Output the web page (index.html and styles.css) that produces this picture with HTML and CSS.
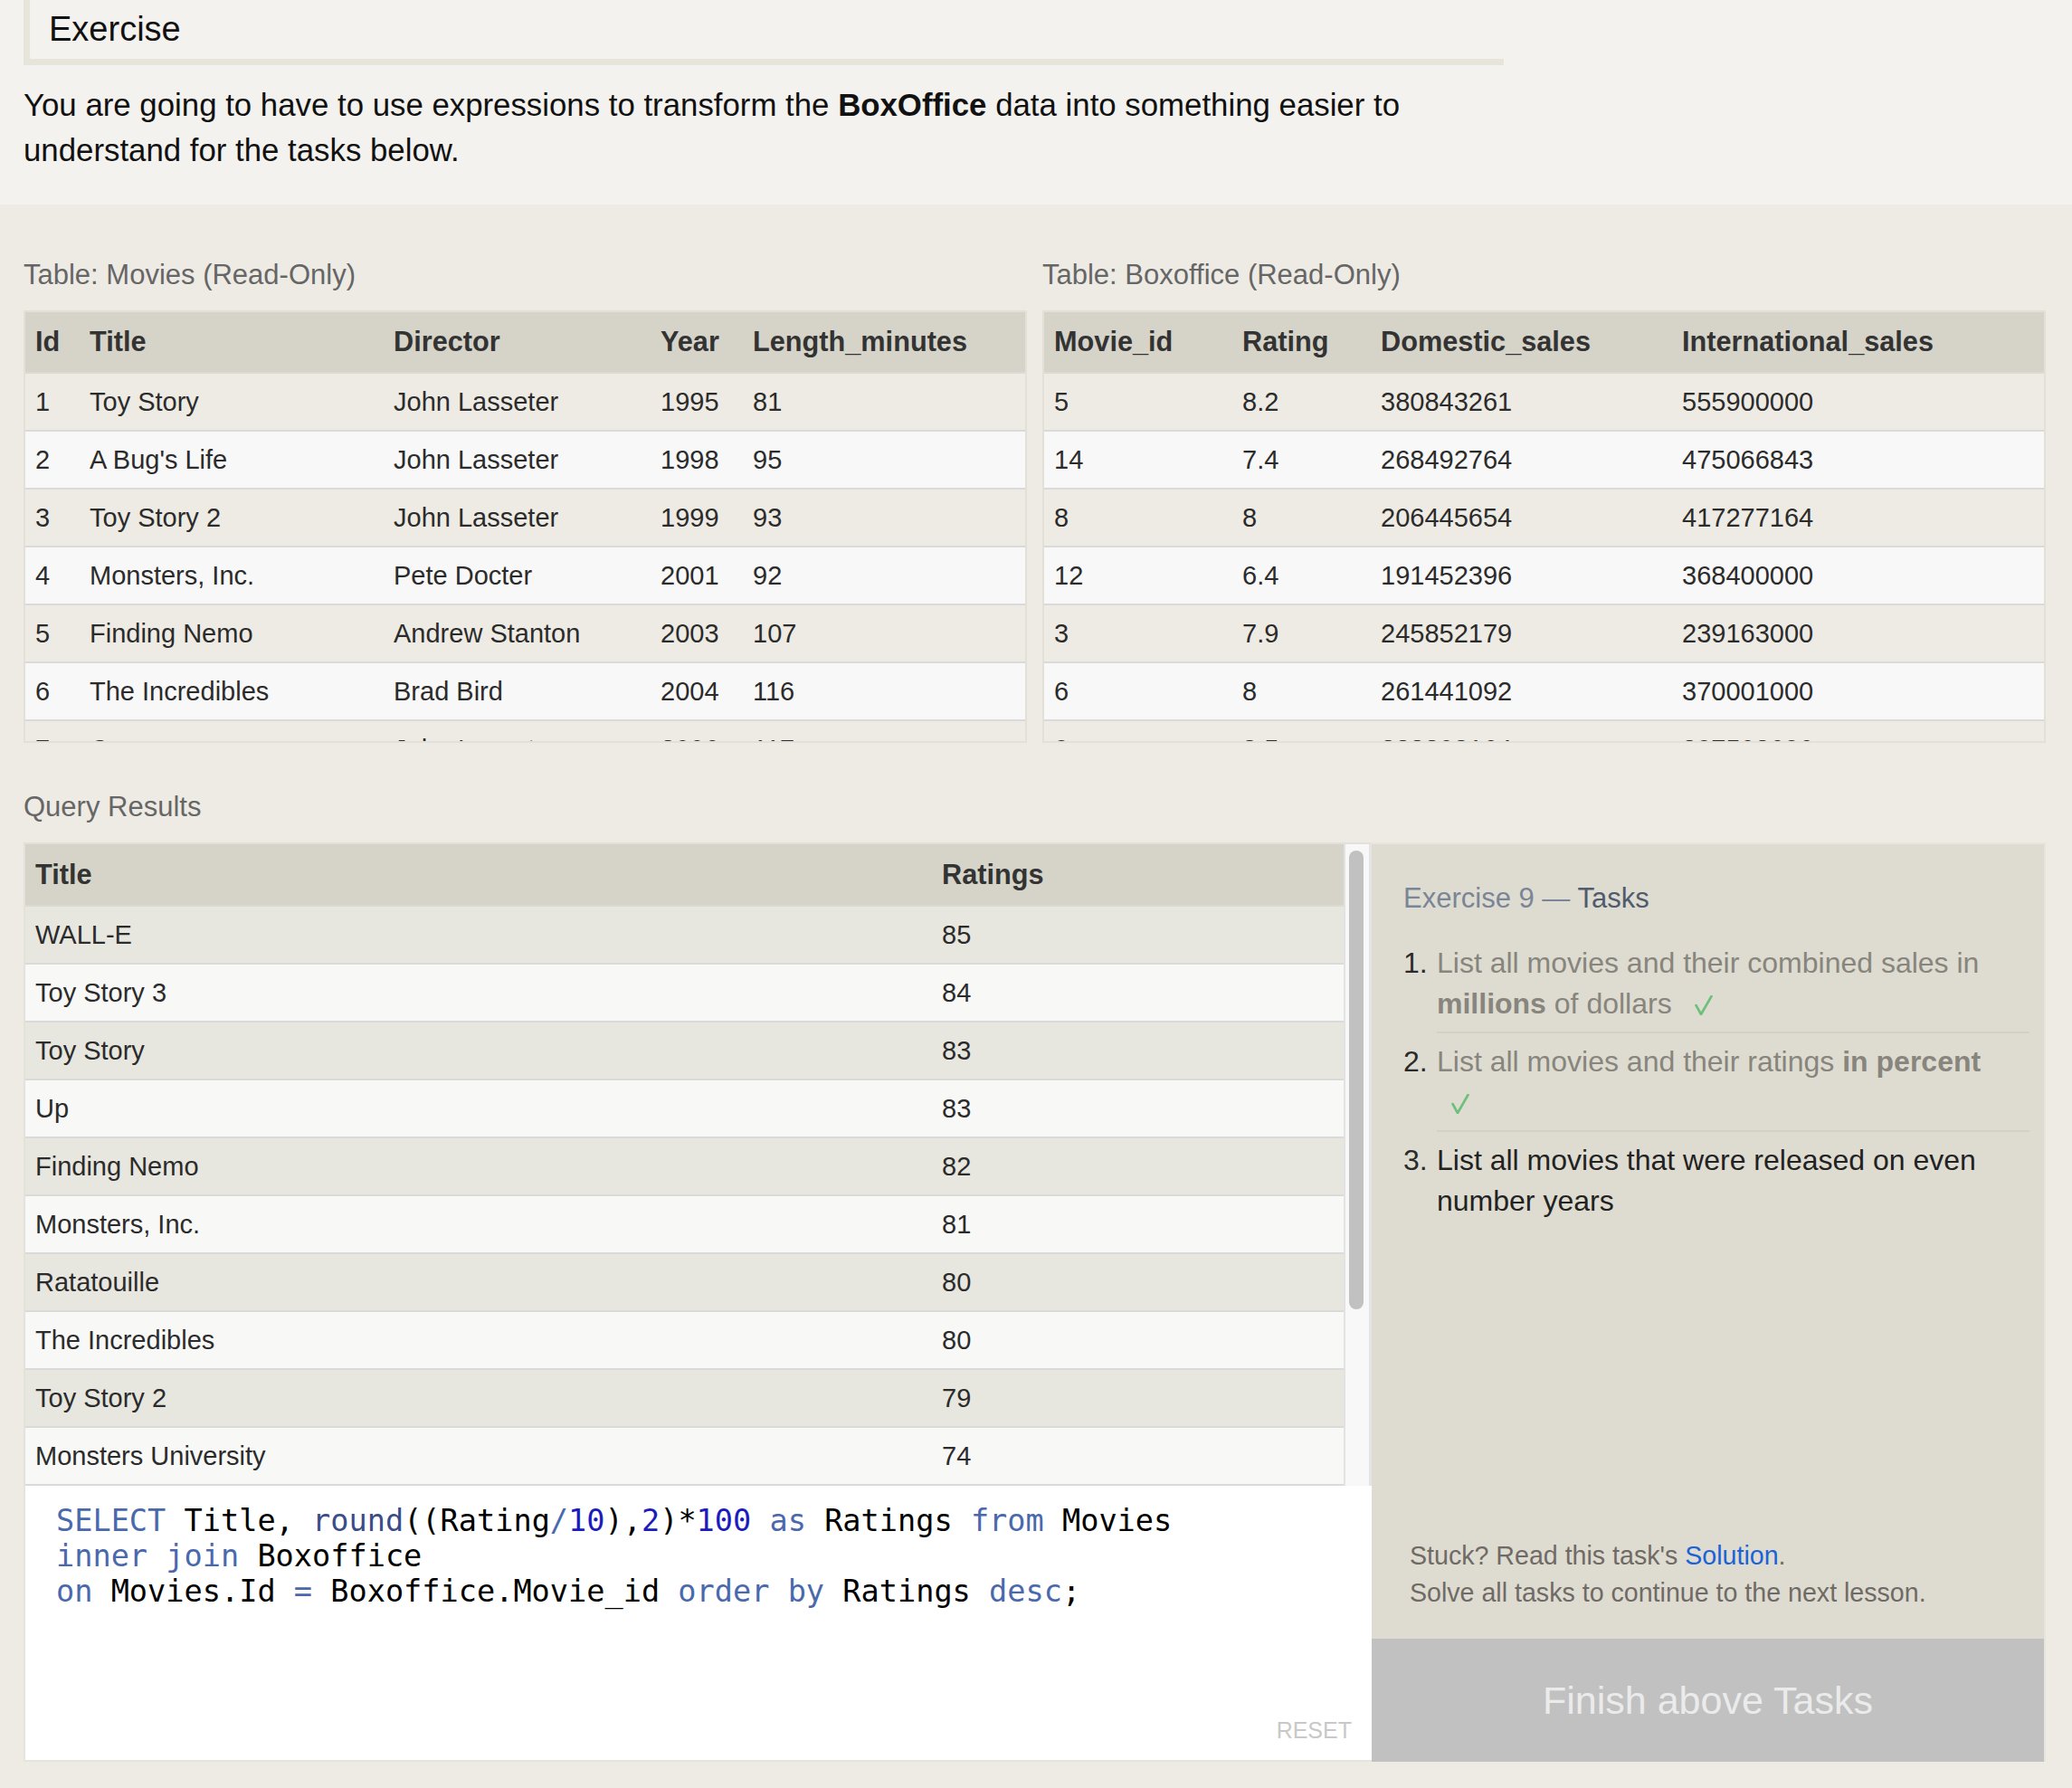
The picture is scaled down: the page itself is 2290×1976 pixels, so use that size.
FILE: index.html
```html
<!DOCTYPE html>
<html lang="en">
<head>
<meta charset="utf-8">
<title>SQLBolt - Exercise 9</title>
<link rel="stylesheet" href="styles.css">
</head>
<body>
<section class="intro">
  <div class="ex-head">Exercise</div>
  <p class="intro-text">You are going to have to use expressions to transform the <b>BoxOffice</b> data into something easier to understand for the tasks below.</p>
</section>

<section class="work">
  <div class="tables">
    <div class="tbl-col">
      <div class="label">Table: Movies (Read-Only)</div>
      <div class="tbl-box">
        <table class="data">
          <colgroup><col class="w-id"><col class="w-title"><col class="w-dir"><col class="w-year"><col></colgroup>
          <thead><tr><th>Id</th><th>Title</th><th>Director</th><th>Year</th><th>Length_minutes</th></tr></thead>
          <tbody>
            <tr><td>1</td><td>Toy Story</td><td>John Lasseter</td><td>1995</td><td>81</td></tr>
            <tr><td>2</td><td>A Bug's Life</td><td>John Lasseter</td><td>1998</td><td>95</td></tr>
            <tr><td>3</td><td>Toy Story 2</td><td>John Lasseter</td><td>1999</td><td>93</td></tr>
            <tr><td>4</td><td>Monsters, Inc.</td><td>Pete Docter</td><td>2001</td><td>92</td></tr>
            <tr><td>5</td><td>Finding Nemo</td><td>Andrew Stanton</td><td>2003</td><td>107</td></tr>
            <tr><td>6</td><td>The Incredibles</td><td>Brad Bird</td><td>2004</td><td>116</td></tr>
            <tr><td>7</td><td>Cars</td><td>John Lasseter</td><td>2006</td><td>117</td></tr>
            <tr><td>8</td><td>Ratatouille</td><td>Brad Bird</td><td>2007</td><td>115</td></tr>
            <tr><td>9</td><td>WALL-E</td><td>Andrew Stanton</td><td>2008</td><td>104</td></tr>
            <tr><td>10</td><td>Up</td><td>Pete Docter</td><td>2009</td><td>101</td></tr>
            <tr><td>11</td><td>Toy Story 3</td><td>Lee Unkrich</td><td>2010</td><td>103</td></tr>
            <tr><td>12</td><td>Cars 2</td><td>John Lasseter</td><td>2011</td><td>120</td></tr>
            <tr><td>13</td><td>Brave</td><td>Brenda Chapman</td><td>2012</td><td>102</td></tr>
            <tr><td>14</td><td>Monsters University</td><td>Dan Scanlon</td><td>2013</td><td>110</td></tr>
          </tbody>
        </table>
      </div>
    </div>
    <div class="tbl-col">
      <div class="label">Table: Boxoffice (Read-Only)</div>
      <div class="tbl-box">
        <table class="data">
          <colgroup><col class="w-mid"><col class="w-rating"><col class="w-dom"><col></colgroup>
          <thead><tr><th>Movie_id</th><th>Rating</th><th>Domestic_sales</th><th>International_sales</th></tr></thead>
          <tbody>
            <tr><td>5</td><td>8.2</td><td>380843261</td><td>555900000</td></tr>
            <tr><td>14</td><td>7.4</td><td>268492764</td><td>475066843</td></tr>
            <tr><td>8</td><td>8</td><td>206445654</td><td>417277164</td></tr>
            <tr><td>12</td><td>6.4</td><td>191452396</td><td>368400000</td></tr>
            <tr><td>3</td><td>7.9</td><td>245852179</td><td>239163000</td></tr>
            <tr><td>6</td><td>8</td><td>261441092</td><td>370001000</td></tr>
            <tr><td>9</td><td>8.5</td><td>223808164</td><td>297503696</td></tr>
            <tr><td>11</td><td>8.4</td><td>415004880</td><td>648167031</td></tr>
            <tr><td>1</td><td>8.3</td><td>191796233</td><td>170162503</td></tr>
            <tr><td>7</td><td>7.2</td><td>244082982</td><td>217900167</td></tr>
            <tr><td>10</td><td>8.3</td><td>293004164</td><td>438338580</td></tr>
            <tr><td>4</td><td>8.1</td><td>289916256</td><td>272900000</td></tr>
            <tr><td>2</td><td>7.2</td><td>162798565</td><td>200600000</td></tr>
            <tr><td>13</td><td>7.2</td><td>237283207</td><td>301700000</td></tr>
          </tbody>
        </table>
      </div>
    </div>
  </div>

  <div class="label label-q">Query Results</div>
  <div class="qgrid">
    <div class="qleft">
      <div class="results">
        <div class="res-scroll">
          <table class="data res">
            <colgroup><col class="w-rtitle"><col></colgroup>
            <thead><tr><th>Title</th><th>Ratings</th></tr></thead>
            <tbody>
              <tr><td>WALL-E</td><td>85</td></tr>
              <tr><td>Toy Story 3</td><td>84</td></tr>
              <tr><td>Toy Story</td><td>83</td></tr>
              <tr><td>Up</td><td>83</td></tr>
              <tr><td>Finding Nemo</td><td>82</td></tr>
              <tr><td>Monsters, Inc.</td><td>81</td></tr>
              <tr><td>Ratatouille</td><td>80</td></tr>
              <tr><td>The Incredibles</td><td>80</td></tr>
              <tr><td>Toy Story 2</td><td>79</td></tr>
              <tr><td>Monsters University</td><td>74</td></tr>
              <tr><td>A Bug's Life</td><td>72</td></tr>
              <tr><td>Cars</td><td>72</td></tr>
              <tr><td>Brave</td><td>72</td></tr>
              <tr><td>Cars 2</td><td>64</td></tr>
            </tbody>
          </table>
        </div>
        <div class="scrollbar"><div class="thumb"></div></div>
      </div>
      <div class="editor">
<pre class="code"><span class="kw">SELECT</span> Title, <span class="fn">round</span>((Rating<span class="kw">/</span><span class="num">10</span>),<span class="num">2</span>)*<span class="num">100</span> <span class="kw">as</span> Ratings <span class="kw">from</span> Movies
<span class="kw">inner join</span> Boxoffice
<span class="kw">on</span> Movies.Id <span class="kw">=</span> Boxoffice.Movie_id <span class="kw">order by</span> Ratings <span class="kw">desc</span>;</pre>
        <span class="reset">RESET</span>
      </div>
    </div>

    <aside class="panel">
      <div class="panel-body">
        <h3 class="tasks-title"><span class="tt-light">Exercise 9 — </span><span class="tt-dark">Tasks</span></h3>
        <ol class="tasks">
          <li class="task done"><span class="num">1.</span><span class="txt">List all movies and their combined sales in <b>millions</b> of dollars <svg class="check" viewBox="0 0 20 22" width="20" height="22"><polyline points="1.5,11 7,21 18.5,1" fill="none" stroke="#6cc07a" stroke-width="2.6" stroke-linejoin="round" stroke-linecap="round"/></svg></span></li>
          <li class="task done"><span class="num">2.</span><span class="txt">List all movies and their ratings <b>in percent</b> <svg class="check" viewBox="0 0 20 22" width="20" height="22"><polyline points="1.5,11 7,21 18.5,1" fill="none" stroke="#6cc07a" stroke-width="2.6" stroke-linejoin="round" stroke-linecap="round"/></svg></span></li>
          <li class="task last"><span class="num">3.</span><span class="txt">List all movies that were released on even number years</span></li>
        </ol>
        <div class="help">
          <div>Stuck? Read this task's <a href="#">Solution</a>.</div>
          <div>Solve all tasks to continue to the next lesson.</div>
        </div>
      </div>
      <div class="finish">Finish above Tasks</div>
    </aside>
  </div>
</section>
</body>
</html>
```

FILE: styles.css
```css
* { box-sizing: border-box; }

body {
  margin: 0;
  background: #eeebe4;
  font-family: "Liberation Sans", Arial, sans-serif;
  color: #222;
}

/* ---------- intro ---------- */
.intro {
  background: #f3f2ee;
  padding: 0 29px 35px 26px;
}

.ex-head {
  width: 1636px;
  border-left: 7px solid #e7e5da;
  border-bottom: 7px solid #e7e5da;
  padding: 8px 21px 9px;
  font-size: 38px;
  line-height: 48px;
  color: #111;
}

.intro-text {
  margin: 19px 0 0;
  width: 1636px;
  font-size: 34.8px;
  line-height: 50px;
  color: #111;
}

/* ---------- work area ---------- */
.work {
  padding: 58px 29px 29px 26px;
}

.tables {
  display: grid;
  grid-template-columns: 1fr 1fr;
  column-gap: 17px;
}

.label {
  font-size: 31px;
  line-height: 40px;
  color: #666;
}

.label-q {
  margin-top: 51px;
}

.tbl-box {
  margin-top: 19px;
  height: 478px;
  border: 2px solid #e3e0d8;
  overflow: hidden;
}

table.data {
  width: 100%;
  border-collapse: separate;
  border-spacing: 0;
  table-layout: fixed;
}

table.data th {
  background: #d6d4c8;
  height: 68px;
  padding: 0 11px;
  text-align: left;
  font-size: 30.7px;
  font-weight: bold;
  color: #333;
  border-bottom: 2px solid #dcdbd3;
  white-space: nowrap;
}

table.data td {
  height: 64px;
  padding: 0 11px;
  font-size: 29px;
  color: #2b2b2b;
  border-bottom: 2px solid #dadada;
  white-space: nowrap;
  overflow: hidden;
}

table.data tbody tr:nth-child(odd) td { background: #eeebe4; }
table.data tbody tr:nth-child(even) td { background: #f8f8f8; }

.w-id { width: 60px; }
.w-title { width: 336px; }
.w-dir { width: 295px; }
.w-year { width: 102px; }

.w-mid { width: 208px; }
.w-rating { width: 153px; }
.w-dom { width: 333px; }

.w-rtitle { width: 1002px; }

/* ---------- query grid ---------- */
.qgrid {
  margin-top: 19px;
  display: grid;
  grid-template-columns: 1490px 1fr;
}

.qleft {
  display: flex;
  flex-direction: column;
}

.results {
  display: flex;
  height: 711px;
  border-top: 2px solid #e2e0d8;
  border-left: 2px solid #e4e2da;
}

.res-scroll {
  flex: 1;
  overflow: hidden;
}

table.res th { height: 69px; }
table.res tbody tr:nth-child(odd) td { background: #e7e6df; }
table.res tbody tr:nth-child(even) td { background: #f8f8f7; }

.scrollbar {
  width: 31px;
  flex: none;
  background: #f8f8f8;
  border-left: 2px solid #e2e2e2;
  border-right: 3px solid #e4e4e4;
  padding: 7px 0 0 4px;
}

.thumb {
  width: 16px;
  height: 507px;
  border-radius: 8px;
  background: #c1c1c1;
}

.editor {
  height: 305px;
  background: #fff;
  border-left: 2px solid #e6e4dc;
  border-bottom: 2px solid #e6e4dc;
  padding: 19px 22px 18px 34px;
  display: flex;
  flex-direction: column;
}

.code {
  margin: 0;
  flex: 1;
  font-family: "DejaVu Sans Mono", monospace;
  font-size: 33.6px;
  line-height: 39px;
  color: #000;
}

.code .kw { color: #4a69ad; }
.code .fn { color: #3b4d88; }
.code .num { color: #1c1cbe; }

.reset {
  align-self: flex-end;
  font-size: 25px;
  line-height: 30px;
  color: #c8c8c8;
}

/* ---------- tasks panel ---------- */
.panel {
  display: flex;
  flex-direction: column;
  background: #dedcd0;
  border-top: 2px solid #e9e6df;
  border-right: 2px solid #e6e4dc;
}

.panel-body {
  flex: 1;
  display: flex;
  flex-direction: column;
  padding: 37px 16px 30px 35px;
}

.tasks-title {
  margin: 0;
  font-size: 31px;
  line-height: 45px;
  font-weight: normal;
}

.tt-light { color: #7a8597; }
.tt-dark { color: #505b6d; }

.tasks {
  list-style: none;
  margin: 18px 0 0;
  padding: 0;
}

.task {
  display: flex;
  font-size: 32px;
  line-height: 45px;
  color: #222;
}

.task .num {
  flex: none;
  width: 37px;
  padding-top: 9px;
  color: #2a2a2a;
}

.task .txt {
  flex: 1;
  padding: 9px 14px 8px 0;
  border-bottom: 2px solid #d3d1c5;
}

.task.last .txt { border-bottom: none; }

.task.done .txt { color: #87857d; }

.check {
  margin-left: 16px;
  vertical-align: -2px;
}

.help {
  margin-top: auto;
  padding-left: 7px;
  font-size: 28.6px;
  line-height: 41px;
  color: #706a66;
}

.help a {
  color: #1b62d6;
  text-decoration: none;
}

.finish {
  height: 136px;
  background: #c1c1c1;
  color: #ebebeb;
  font-size: 43px;
  display: flex;
  align-items: center;
  justify-content: center;
}
```
